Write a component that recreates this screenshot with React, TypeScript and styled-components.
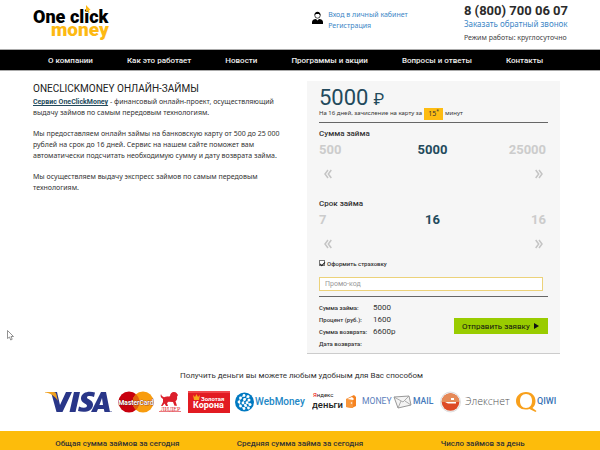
import React from "react";
import styled, { createGlobalStyle } from "styled-components";

const GlobalStyle = createGlobalStyle`
  * { box-sizing: border-box; }
  body { margin: 0; background: #fff; color: #333; font-family: Roboto, "Noto Sans", sans-serif; font-size: 8px; line-height: 11px; }
  button, input, select { font-family: inherit; }
  a { text-decoration: none; }
  h1, h2, p, dl, dd, dt { margin: 0; }
`;

const Header = styled.header`
  display: flex;
  justify-content: space-between;
  align-items: flex-start;
  height: 49px;
  padding: 0 32px 0 33px;
`;
const LogoLink = styled.a`
  display: block;
  margin-top: 5px;
  svg { display: block; }
`;
const Account = styled.div`
  display: flex;
  gap: 5px;
  margin: 9px 0 0 146px;
  font-family: "Noto Sans", sans-serif;
  font-size: 7px;
`;
const AccountLinks = styled.div`
  display: flex;
  flex-direction: column;
  a { color: #3b86c6; }
`;
const Contact = styled.address`
  display: flex;
  flex-direction: column;
  font-family: "Noto Sans", sans-serif;
  font-style: normal;
  white-space: nowrap;
  padding-top: 3px;
`;
const Phone = styled.a`
  color: #2b2b2b;
  font-family: Roboto, sans-serif;
  font-weight: 700;
  font-size: 13px;
  line-height: 15px;
`;
const Callback = styled.a`
  color: #3b86c6;
  font-size: 8px;
  line-height: 12px;
`;
const Hours = styled.span`
  color: #444;
  font-size: 7px;
  margin-top: 2px;
`;
const Nav = styled.nav`
  display: flex;
  gap: 34px;
  align-items: center;
  height: 22px;
  padding: 0 48px;
  background: #000;
  border: solid #aaa;
  border-width: 1px 0;
  a { color: #eee; font-weight: 500; white-space: nowrap; }
`;
const Main = styled.main`
  display: grid;
  grid-template-columns: 1fr 1fr;
  gap: 21px;
  padding: 10px 40px 0 33px;
`;
const Title = styled.h1`
  color: #222;
  font-size: 10px;
  line-height: 15px;
  font-weight: 400;
  text-transform: uppercase;
`;
const Text = styled.p`
  color: #333;
  font-family: "Noto Sans", sans-serif;
  font-size: 7px;
  margin-bottom: 10px;
  a { color: #234a5c; font-family: Roboto, sans-serif; font-weight: 700; line-height: 1; text-decoration: underline; }
`;
const Panel = styled.form`
  background: #f6f6f6;
  border-bottom: 1px solid #ccc;
  padding: 8px 12px 3px;
`;
const Amount = styled.div`
  display: flex;
  align-items: baseline;
  gap: 5px;
  height: 18px;
  color: #234a5c;
  font-size: 22px;
  line-height: 18px;
  small { font-size: 16px; }
`;
const Terms = styled.p`
  display: flex;
  gap: 2px;
  align-items: center;
  height: 16px;
  padding-bottom: 2px;
  font-family: "Noto Sans", sans-serif;
  font-size: 6px;
  border-bottom: 1px solid #666;
`;
const Minutes = styled.strong`
  background: #fdbc12;
  padding: 0 4px;
  line-height: 12px;
  font-size: 7px;
  font-weight: 400;
  sup { font-size: 5px; line-height: 0; }
`;
const Field = styled.section<{ $compact?: boolean }>`
  height: ${(p) => (p.$compact ? "64px" : "70px")};
  padding-top: 5px;
`;
const FieldTitle = styled.h2`
  font-size: 8px;
  line-height: 12px;
  font-weight: 500;
`;
const Scale = styled.div`
  display: flex;
  justify-content: space-between;
  color: #ccc;
  font-size: 13px;
  line-height: 20px;
  padding-right: 2px;
  output, span { flex: 1; font-weight: 700; }
  output { text-align: center; color: #234a5c; }
  span:last-child { text-align: right; }
`;
const Steps = styled.div`
  display: flex;
  justify-content: space-between;
  padding: 7px 4px 0;
`;
const Step = styled.button`
  display: flex;
  padding: 2px 1px;
  border: 0;
  background: none;
`;
const Insurance = styled.label`
  display: flex;
  align-items: center;
  gap: 2px;
  height: 12px;
  font-size: 6px;
  font-weight: 500;
`;
const Tick = styled.input`
  appearance: none;
  width: 6px;
  height: 6px;
  margin: 0;
  border: 1px solid #777;
  background: #fff;
  display: grid;
  place-items: center;
  &:checked::after { content: ""; width: 4px; height: 2px; border: solid #222; border-width: 0 0 1px 1px; transform: rotate(-45deg); }
`;
const Promo = styled.input`
  display: block;
  width: calc(100% - 5px);
  height: 14px;
  margin: 8px 0 5px;
  padding: 0 5px;
  border: 1px solid #ecd27a;
  background: #fff;
  font-size: 7px;
  &::placeholder { color: #999; }
`;
const Result = styled.div`
  display: flex;
  justify-content: space-between;
  align-items: center;
  border-top: 1px solid #666;
  padding-top: 5px;
`;
const Totals = styled.dl`
  display: grid;
  grid-template-columns: 54px auto;
  line-height: 12px;
  dt { font-size: 6px; font-weight: 500; }
  dd { font-size: 8px; }
`;
const Submit = styled.button`
  display: flex;
  align-items: center;
  justify-content: space-between;
  width: 94px;
  height: 16px;
  padding: 0 9px 0 8px;
  border: 0;
  background: #99cc00;
  color: #111;
  font-size: 8px;
  font-weight: 400;
`;
const Payments = styled.section`
  padding: 16px 41px 0 44px;
`;
const PaymentsTitle = styled.p`
  text-align: center;
  line-height: 12px;
`;
const Brands = styled.div`
  display: flex;
  justify-content: space-between;
  align-items: center;
  margin: 9px 0 18px;
  svg { display: block; flex: none; }
`;
const Stats = styled.footer`
  display: grid;
  grid-template-columns: repeat(3, 1fr);
  padding: 7px 26px 0;
  background: #fdbc0b;
  color: #333;
  text-align: center;
  line-height: 12px;
  font-weight: 500;
`;
const Pointer = styled.svg`
  position: absolute;
  left: 7px;
  top: 330px;
`;

const menu = ["О компании", "Как это работает", "Новости", "Программы и акции", "Вопросы и ответы", "Контакты"];
const totals = [["Сумма займа:", "5000"], ["Процент (руб.):", "1600"], ["Сумма возврата:", "6600р"], ["Дата возврата:", ""]];
const stats = ["Общая сумма займов за сегодня", "Средняя сумма займа за сегодня", "Число займов за день"];

const Chevrons = ({ back = false }: { back?: boolean }) => (
  <svg width="8" height="10" viewBox="0 0 8 10" fill="none" stroke="#c4c4c4" strokeWidth="1.5">
    <path d={back ? "M4 1 1 5l3 4M7.3 1l-3 4 3 4" : "M.7 1l3 4-3 4M4 1l3 4-3 4"} />
  </svg>
);

interface SliderProps {
  title: string;
  min: string;
  value: string;
  max: string;
  compact?: boolean;
}

function Slider({ title, min, value, max, compact }: SliderProps) {
  return (
    <Field $compact={compact}>
      <FieldTitle>{title}</FieldTitle>
      <Scale><span>{min}</span><output>{value}</output><span>{max}</span></Scale>
      <Steps>
        <Step type="button" aria-label="Уменьшить"><Chevrons back /></Step>
        <Step type="button" aria-label="Увеличить"><Chevrons /></Step>
      </Steps>
    </Field>
  );
}

const Logo = () => (
  <svg width="77" height="39" viewBox="0 0 77 39" fontFamily="Roboto, sans-serif" fontWeight="900">
    <text x="0" y="17.500" fontSize="18" fill="#000">One click</text>
    <text x="18" y="31" fontSize="19" fill="#fdb913">money</text>
    <path d="M53 0v7l1.500-1 1 2 1.200-.6-1-2 1.900-.4z" fill="#fdb913" />
  </svg>
);

const Visa = () => (
  <svg width="68" height="22" viewBox="0 0 68 22">
    <g fill="#293688">
      <path d="M7 1h6l3 13L22 1h6L18.500 21h-6z" />
      <path d="M30 1h6l-4.500 20h-6z" />
      <path d="M51 1.500 50 6c-3-1.300-7-1.300-7 .5 0 2 6.500 2.500 6 7.500-.5 6.500-8.500 8-15 6l1-4.500c4 1.800 8 1.500 8-.7S36.500 12 37 7c.6-6 8-7.500 14-5.500z" />
      <path fillRule="evenodd" d="M57 1h5l4 20h-5.500l-.7-3H54l-1.300 3H47zm1 6-2.600 7H59z" />
    </g>
    <path d="M1 1h8.500c2 0 2.500 1 3 3l1.300 6C11 5 6 2 1 1.600z" fill="#f0a11f" />
    <circle cx="67" cy="20.500" r=".6" fill="#293688" />
  </svg>
);
const MasterCard = () => (
  <svg width="36" height="22" viewBox="0 0 36 22">
    <circle cx="11" cy="11" r="10.500" fill="#c8000e" />
    <circle cx="25" cy="11" r="10.500" fill="#f89c0e" />
    <path d="M18 3.200a10.500 10.500 0 0 1 0 15.600 10.500 10.500 0 0 1 0-15.600z" fill="#e2620e" />
    <text x="18" y="13.500" textAnchor="middle" fontFamily="Roboto, sans-serif" fontSize="6.600" fontWeight="700" fill="#fff" stroke="#6b1010" strokeWidth=".6" paintOrder="stroke">MasterCard</text>
  </svg>
);
const Lider = () => (
  <svg width="23" height="22" viewBox="0 0 23 22" fill="#dc1f2b">
    <path d="M4 8c-2-1-3-3-2-5 .5 1.500 1 2.500 3 3.200C7 5.500 9 5.500 11 5.200 11 2.500 13 .8 15 1c2.500 0 3 1.500 4 3l-1 1.800c.5 2-.2 4-1.500 4.500l1.500 4.500h-2.500L14 11l-4.500-.3L8 12l1 3H7l-1.500-2.500L3.500 15H2l2-4z" />
    <text x="11.500" y="19.500" textAnchor="middle" fontFamily="Liberation Serif, serif" fontSize="6" fontWeight="400">ЛИДЕР</text>
    <path d="M0 20.200h22v.6H0z" />
  </svg>
);
const Korona = () => (
  <svg width="42" height="22" viewBox="0 0 42 22" fontFamily="Roboto, sans-serif" fontWeight="700" fill="#fff">
    <path fill="#e21b22" d="M0 0h42v22H0z" />
    <path fill="#f0484c" d="M0 0h42v2H0z" />
    <path fill="#f8a51b" d="m5 4 2 2 1.500-3L10 6l2-2-1 5H6z" />
    <text x="13" y="9.500" fontSize="6">Золотая</text>
    <text x="5" y="17" fontSize="9">Корона</text>
  </svg>
);
const WebMoney = () => (
  <svg width="71" height="22" viewBox="0 0 71 22">
    <circle cx="9.500" cy="11" r="9.500" fill="#0079c1" />
    <g fill="#fff">
      <circle cx="9" cy="4.500" r="1.400" /><circle cx="5.500" cy="7" r="1.400" /><circle cx="4" cy="11" r="1.400" />
      <circle cx="5.500" cy="15" r="1.400" /><circle cx="9" cy="17.500" r="1.400" /><circle cx="13" cy="5.500" r="1.500" />
      <circle cx="9.500" cy="8.500" r="1.400" /><circle cx="8" cy="12" r="1.400" /><circle cx="10.500" cy="14.500" r="1.400" />
      <circle cx="14" cy="9" r="1.500" /><circle cx="12" cy="11.700" r="1.400" /><circle cx="15" cy="13.500" r="1.500" /><circle cx="13.500" cy="17" r="1.400" />
    </g>
    <path d="M9 4.500 5.500 7 4 11l1.500 4L9 17.500M13 5.500l-3.500 3L8 12l2.500 2.500 3 2.500M14 9l-2 2.700 3 1.800" fill="none" stroke="#fff" strokeWidth=".7" />
    <text x="20" y="14" fontFamily="Roboto, sans-serif" fontSize="10" fontWeight="500" fill="#2387c6">WebMoney</text>
  </svg>
);
const Yandex = () => (
  <svg width="45" height="22" viewBox="0 0 45 22" fontFamily="Roboto, sans-serif">
    <text x="1" y="6" fontSize="6" fill="#222"><tspan fill="#e00">Я</tspan>ндекс</text>
    <text x="0" y="17" fontSize="9.500" fontWeight="500" fill="#222">деньги</text>
    <path d="m34 8 8-4 2 2v9l-4 2-6-1z" fill="#f58220" />
    <path d="m34 8 7 1v8l-7-1z" fill="#f8963b" />
    <path d="m35 8 5-2 2 2-1 1z" fill="#fff" />
    <circle cx="39.500" cy="12" r=".8" fill="#fff" />
  </svg>
);
const MoneyMail = () => (
  <svg width="72" height="22" viewBox="0 0 72 22" fontFamily="Roboto, sans-serif">
    <text x="0" y="13" fontSize="8.600" fill="#5c80bc">MONEY</text>
    <path d="M32 6l15-1 2 9-13 3z" fill="#f4f4f4" stroke="#999" />
    <path d="m32 6 9 5 6-6M36 17l3-7M49 14l-6-4" fill="none" stroke="#999" strokeWidth=".8" />
    <text x="51" y="13" fontSize="8.600" fontWeight="500" fill="#4479bb">MAIL</text>
  </svg>
);
const Elecsnet = () => (
  <svg width="71" height="22" viewBox="0 0 71 22">
    <circle cx="10.500" cy="11" r="10" fill="#f2f2f2" stroke="#ccc" strokeWidth=".6" />
    <circle cx="10.500" cy="11" r="8.800" fill="#dd4a26" />
    <path d="M1.700 11a8.800 8.800 0 0 1 17.600 0z" fill="#e58a58" />
    <path d="M5 11h11v1.500H8zM11 7h3v2h-3z" fill="#fff" />
    <text x="25" y="14" fontFamily="Open Sans, sans-serif" fontSize="10.500" fontWeight="300" fill="#555">Элекснет</text>
  </svg>
);
const Qiwi = () => (
  <svg width="43" height="22" viewBox="0 0 43 22">
    <path fillRule="evenodd" fill="#f8a01c" d="M10 1c6 0 9.500 4 9.500 9 0 3-1 5-3 7l4 3-1 1-6-3C6 20 0 16 0 10 0 5 4 1 10 1zm0 2C6 3 4 6 4 10s2 7 6 7c4 0 6-3 6-7s-2-7-6-7z" />
    <text x="21" y="13" fontFamily="Roboto, sans-serif" fontSize="9" fontWeight="500" fill="#3974b6">QIWI</text>
  </svg>
);

export default function App() {
  return (
    <>
      <GlobalStyle />
      <Header>
        <LogoLink href="#" aria-label="One click money"><Logo /></LogoLink>
        <Account>
          <svg width="11" height="16" viewBox="0 0 11 16">
            <path d="M0 15v-2c0-2 2-3 4-3l1.500 1.500L7 10c2 0 4 1 4 3v2z" fill="#000" />
            <circle cx="5.500" cy="6.500" r="2.700" fill="#fff" stroke="#000" strokeWidth=".7" />
            <path d="M2.500 6.500C2 1.500 9 1.500 8.500 6.500L7 5 3.500 5z" fill="#000" />
          </svg>
          <AccountLinks><a href="#login">Вход в личный кабинет</a><a href="#register">Регистрация</a></AccountLinks>
        </Account>
        <Contact>
          <Phone href="tel:88007000607">8 (800) 700 06 07</Phone>
          <Callback href="#callback">Заказать обратный звонок</Callback>
          <Hours>Режим работы: круглосуточно</Hours>
        </Contact>
      </Header>
      <Nav>{menu.map((item) => <a href="#" key={item}>{item}</a>)}</Nav>
      <Main>
        <article>
          <Title>OneClickMoney онлайн-займы</Title>
          <Text><a href="#service">Сервис OneClickMoney</a> - финансовый онлайн-проект, осуществляющий выдачу займов по самым передовым технологиям.</Text>
          <Text>Мы предоставляем онлайн займы на банковскую карту от 500 до 25 000 рублей на срок до 16 дней. Сервис на нашем сайте поможет вам автоматически подсчитать необходимую сумму и дату возврата займа.</Text>
          <Text>Мы осуществляем выдачу экспресс займов по самым передовым технологиям.</Text>
        </article>
        <Panel>
          <Amount>5000<small>₽</small></Amount>
          <Terms>На 16 дней, зачисление на карту за <Minutes>15<sup>*</sup></Minutes> минут</Terms>
          <Slider title="Сумма займа" min="500" value="5000" max="25000" />
          <Slider title="Срок займа" min="7" value="16" max="16" compact />
          <Insurance><Tick type="checkbox" defaultChecked />Оформить страховку</Insurance>
          <Promo type="text" aria-label="Промо-код" placeholder="Промо-код" />
          <Result>
            <Totals>{totals.map(([label, value]) => <React.Fragment key={label}><dt>{label}</dt><dd>{value}</dd></React.Fragment>)}</Totals>
            <Submit type="button">Отправить заявку<svg width="5" height="6" viewBox="0 0 5 6"><path d="M0 0l5 3-5 3z" fill="#111" /></svg></Submit>
          </Result>
        </Panel>
      </Main>
      <Payments>
        <PaymentsTitle>Получить деньги вы можете любым удобным для Вас способом</PaymentsTitle>
        <Brands><Visa /><MasterCard /><Lider /><Korona /><WebMoney /><Yandex /><MoneyMail /><Elecsnet /><Qiwi /></Brands>
      </Payments>
      <Stats>{stats.map((label) => <span key={label}>{label}</span>)}</Stats>
      <Pointer width="7" height="11" viewBox="0 0 7 11"><path d="M.5.500v8l2-1.500 1.200 3 1.500-.7L4 6.500h2.500z" fill="#fff" stroke="#777" strokeWidth=".8" /></Pointer>
    </>
  );
}
